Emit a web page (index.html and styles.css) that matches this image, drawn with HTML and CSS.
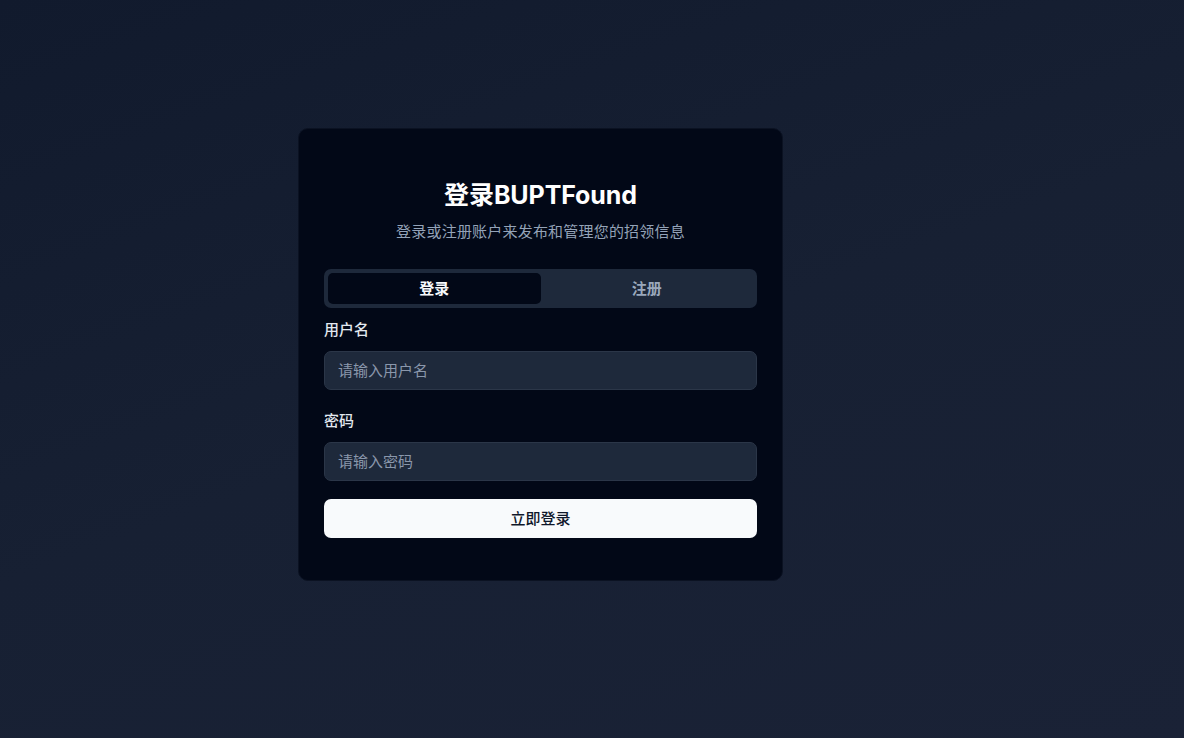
FILE: index.html
```html
<!DOCTYPE html>
<html lang="zh-CN">
<head>
<meta charset="utf-8">
<title>登录BUPTFound</title>
<link rel="stylesheet" href="styles.css">
</head>
<body>
<main class="page">
  <section class="card">
    <header class="card-header">
      <h1 class="title">登录BUPTFound</h1>
      <p class="subtitle">登录或注册账户来发布和管理您的招领信息</p>
    </header>
    <div class="tabs">
      <button class="tab active">登录</button>
      <button class="tab">注册</button>
    </div>
    <form class="form">
      <div class="field">
        <label class="label">用户名</label>
        <input class="input" type="text" placeholder="请输入用户名">
      </div>
      <div class="field">
        <label class="label">密码</label>
        <input class="input" type="password" placeholder="请输入密码">
      </div>
      <button class="submit" type="button">立即登录</button>
    </form>
  </section>
</main>
</body>
</html>
```

FILE: styles.css
```css
* { box-sizing: border-box; }
html, body { margin: 0; height: 100%; }
body {
  background: linear-gradient(160deg, #111a2d 0%, #172033 50%, #1a2236 100%);
  font-family: "Inter", "Noto Sans CJK SC", sans-serif;
  color: #f8fafc;
}
.page {
  min-height: 738px;
  padding: 128px 0 0 298px;
}
.card {
  width: 485px;
  background: #020817;
  border: 1px solid #0b1222;
  border-radius: 10px;
  padding: 50px 25px 42px 25px;
}
.card-header { text-align: center; }
.title {
  margin: 0;
  font-size: 25px;
  line-height: 32px;
  font-weight: 700;
  color: #ffffff;
  letter-spacing: -0.1px;
}
.subtitle {
  margin: 9px 0 0;
  font-size: 15px;
  line-height: 24px;
  color: #94a3b8;
  letter-spacing: 0.2px;
}
.tabs {
  margin-top: 25px;
  display: grid;
  grid-template-columns: 1fr 1fr;
  background: #1e293b;
  border-radius: 7px;
  padding: 4px;
  height: 39px;
}
.tab {
  border: 0;
  background: transparent;
  font-family: inherit;
  font-size: 15px;
  font-weight: 600;
  color: #9aa8bc;
  border-radius: 5px;
  padding: 0 0 3px;
}
.tab.active {
  background: #020817;
  color: #f8fafc;
}
.form {
  display: flex;
  flex-direction: column;
}
.field {
  display: flex;
  flex-direction: column;
  gap: 10px;
  margin-top: 11px;
}
.field + .field { margin-top: 20px; }
.label {
  font-size: 15px;
  line-height: 22px;
  font-weight: 500;
  color: #e2e8f0;
}
.input {
  height: 39px;
  width: 100%;
  background: #1e293b;
  border: 1px solid #2b3648;
  border-radius: 7px;
  padding: 0 13px;
  font-family: inherit;
  font-size: 15px;
  color: #f8fafc;
  outline: none;
}
.input::placeholder { color: #8a97ab; }
.submit {
  margin-top: 18px;
  height: 39px;
  width: 100%;
  border: 0;
  border-radius: 7px;
  background: #f8fafc;
  color: #0f172a;
  font-family: inherit;
  font-size: 15px;
  font-weight: 500;
  padding: 0 0 3px;
}
```
